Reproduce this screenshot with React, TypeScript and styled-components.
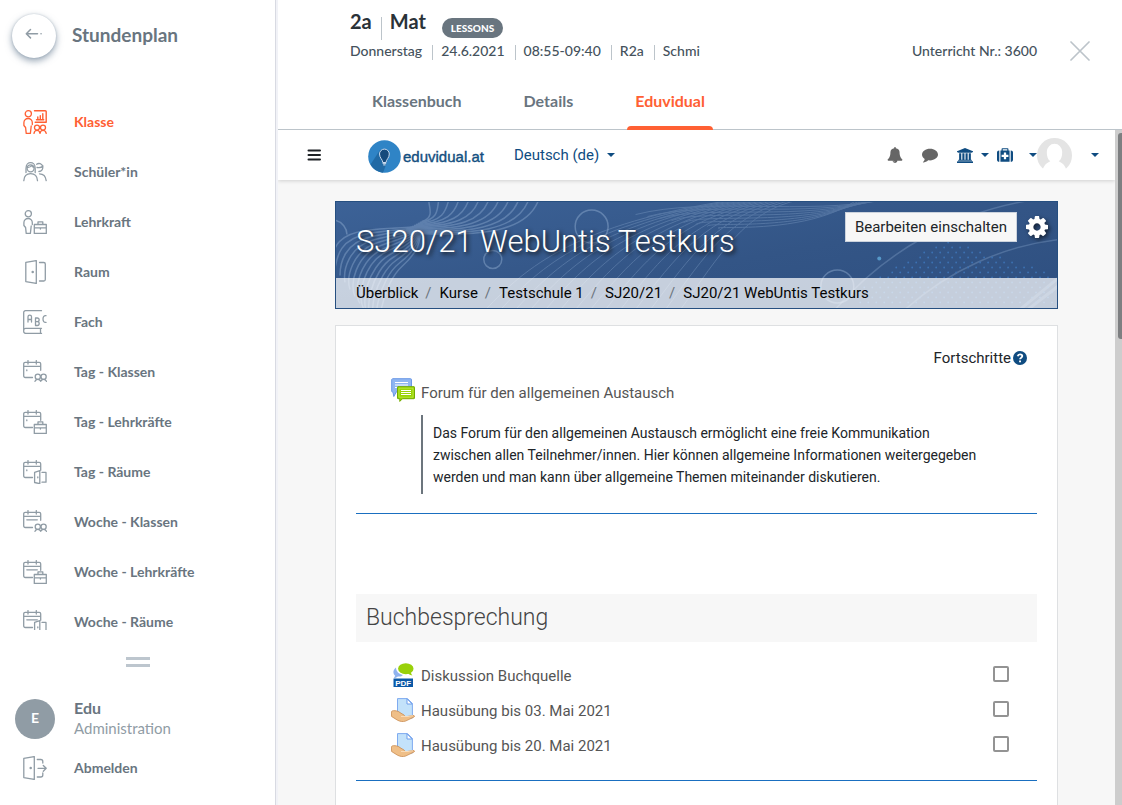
import React from "react";
import styled, { createGlobalStyle } from "styled-components";

const brand = {
  orange: "#ff6033",
  slate: "#69757f",
  slateDark: "#45525c",
  slateLight: "#909ca5",
  rule: "#bcc4ca",
  navy: "#0f4c81",
};

const GlobalStyle = createGlobalStyle`
  *, *::before, *::after { box-sizing: border-box; }
  html, body { margin: 0; padding: 0; background: #fff; }
  body { font-family: Lato, "Liberation Sans", sans-serif; }
  button { font: inherit; color: inherit; background: none; border: 0; padding: 0; cursor: pointer; }
  a { color: inherit; text-decoration: none; }
  ul, ol, h1, h2, p { margin: 0; padding: 0; list-style: none; }
  svg { display: block; flex: none; }
`;

/* ---------- shell ---------- */

const Shell = styled.div`
  display: flex;
  height: 100vh;
  overflow: hidden;
`;

const Sidebar = styled.aside`
  flex: none;
  width: 278px;
  display: flex;
  flex-direction: column;
  border-right: 2px solid #f1f2f7;
  box-shadow: inset -1px 0 0 #d8dae2;
`;

const SidebarHead = styled.div`
  display: flex;
  align-items: flex-start;
  gap: 16px;
  height: 97px;
  padding: 14px 12px 0;
`;

const BackButton = styled.button`
  width: 44px;
  height: 44px;
  border-radius: 50%;
  background: #fff;
  box-shadow: 0 3px 7px rgba(80, 105, 130, 0.6), 0 0 2px rgba(80, 105, 130, 0.3);
  display: flex;
  justify-content: center;
  padding-top: 12px;
`;

const SidebarTitle = styled.h1`
  font-size: 19px;
  line-height: 42px;
  font-weight: 700;
  color: ${brand.slate};
`;

const NavList = styled.ul`
  flex: 1;
  min-height: 0;
  overflow: hidden;
`;

const NavLink = styled.a<{ $active?: boolean }>`
  display: flex;
  align-items: center;
  gap: 27px;
  height: 50px;
  padding-left: 23px;
  font-size: 14px;
  font-weight: 700;
  color: ${(p) => (p.$active ? brand.orange : brand.slate)};
  svg { color: ${(p) => (p.$active ? brand.orange : brand.slateLight)}; }
  span { padding-bottom: 2px; }
`;

const SidebarFoot = styled.div`
  flex: none;
  padding: 27px 0 12px;
`;

const Handle = styled.div`
  width: 24px;
  height: 10px;
  margin: 0 auto 27px;
  border: solid #bdc6ce;
  border-width: 3px 0;
`;

const User = styled.div`
  display: flex;
  align-items: center;
  gap: 19px;
  padding: 4px 15px 3px;
`;

const Avatar = styled.div`
  width: 40px;
  height: 40px;
  border-radius: 50%;
  background: ${brand.slateLight};
  color: #fff;
  font-size: 14px;
  font-weight: 700;
  line-height: 38px;
  text-align: center;
`;

const UserText = styled.div`
  padding-bottom: 2px;
  line-height: 20px;
`;

const UserName = styled.div`
  font-size: 16px;
  font-weight: 700;
  color: ${brand.slate};
`;

const UserRole = styled.div`
  font-size: 15px;
  color: ${brand.slateLight};
`;

/* ---------- lesson header ---------- */

const Main = styled.main`
  flex: 1;
  min-width: 0;
  display: flex;
  flex-direction: column;
`;

const LessonHead = styled.header`
  display: flex;
  justify-content: space-between;
  padding: 9px 32px 0 72px;
`;

const TitleRow = styled.div`
  display: flex;
  align-items: flex-start;
  height: 32px;
  font-size: 20px;
  line-height: 25px;
  font-weight: 700;
  color: #2a3238;
`;

const TitlePart = styled.span`
  & + & {
    margin-left: 9px;
    padding-left: 9px;
    position: relative;
  }
  & + &::before {
    content: "";
    position: absolute;
    left: 0;
    top: 8px;
    width: 1px;
    height: 23px;
    background: ${brand.rule};
  }
`;

const Badge = styled.span`
  margin: 9px 0 0 16px;
  padding: 0 9px;
  border-radius: 10px;
  background: ${brand.slate};
  color: #fff;
  font-size: 10px;
  font-weight: 900;
  line-height: 20px;
`;

const Meta = styled.ul`
  display: flex;
  font-size: 14px;
  line-height: 19px;
  font-weight: 500;
  color: ${brand.slateDark};
`;

const MetaItem = styled.li`
  & + & {
    margin-left: 10px;
    padding-left: 9px;
    background: linear-gradient(${brand.rule}, ${brand.rule}) 0 4px / 1px 16px no-repeat;
  }
`;

const HeadRight = styled.div`
  display: flex;
  gap: 33px;
  padding-top: 32px;
  font-size: 14px;
  line-height: 19px;
  font-weight: 500;
  color: ${brand.slateDark};
`;

const CloseButton = styled.button`
  height: 20px;
  color: ${brand.rule};
`;

const Tabs = styled.nav`
  display: flex;
  gap: 46px;
  padding: 16px 86px 0;
  border-bottom: 1px solid ${brand.rule};
`;

const Tab = styled.a<{ $active?: boolean }>`
  padding: 0 8px;
  height: 53px;
  margin-bottom: -1px;
  font-size: 16px;
  line-height: 48px;
  font-weight: 700;
  color: ${(p) => (p.$active ? brand.orange : brand.slate)};
  position: relative;
  &::after {
    content: "";
    display: ${(p) => (p.$active ? "block" : "none")};
    position: absolute;
    inset: auto 0 0;
    height: 4px;
    border-radius: 4px 4px 0 0;
    background: ${brand.orange};
  }
`;

/* ---------- embedded course page ---------- */

const Frame = styled.div`
  flex: 1;
  min-height: 0;
  display: flex;
  font-family: Roboto, "Liberation Sans", sans-serif;
  font-size: 15px;
`;

const Page = styled.div`
  flex: 1;
  min-width: 0;
  display: flex;
  flex-direction: column;
  overflow: hidden;
  background: #f7f7f7;
`;

const ScrollTrack = styled.div`
  flex: none;
  width: 7px;
  padding: 3px 0 0 3px;
  background: #cdcdcd;
`;

const ScrollThumb = styled.div`
  height: 206px;
  border-radius: 3px 0 0 3px;
  background: #7d7f81;
`;

const TopBar = styled.div`
  flex: none;
  display: flex;
  align-items: center;
  height: 50px;
  padding: 0 16px 0 29px;
  background: #fff;
  box-shadow: 0 1px 4px rgba(0, 0, 0, 0.16);
  color: ${brand.navy};
`;

const Logo = styled.a`
  display: flex;
  align-items: center;
  gap: 2px;
  margin: 2px 30px 0 46px;
  font-family: "Liberation Sans", sans-serif;
  font-size: 15px;
  color: #134f80;
  -webkit-text-stroke: 0.4px #134f80;
`;

const MenuButton = styled.button`
  display: flex;
  align-items: center;
  gap: 8px;
`;

const Tools = styled.div`
  flex: 1;
  display: flex;
  align-items: center;
  justify-content: flex-end;
`;

const ToolButton = styled.button<{ $muted?: boolean; $space: number }>`
  display: flex;
  align-items: center;
  gap: 8px;
  margin-left: ${(p) => p.$space}px;
  color: ${(p) => (p.$muted ? "#666" : brand.navy)};
`;

const WideToolButton = styled(ToolButton)`
  gap: 16px;
`;

const Caret = styled.span`
  border: 4px solid transparent;
  border-top-color: currentColor;
  border-bottom: 0;
`;

const UserMenu = styled.button`
  display: flex;
  align-items: center;
  gap: 19px;
  color: ${brand.navy};
`;

const Content = styled.div`
  flex: 1;
  display: flex;
  flex-direction: column;
  padding: 21px 57px 0;
`;

const Banner = styled.header`
  position: relative;
  border: 1px solid #264f80;
  background: linear-gradient(170deg, #3c6297 0%, #335586 55%, #2e4f80 100%);
`;

const BannerArt = styled.svg`
  position: absolute;
  inset: 0;
  width: 100%;
  height: 100%;
`;

const BannerTop = styled.div`
  position: relative;
  display: flex;
  justify-content: space-between;
  align-items: flex-start;
  height: 76px;
  padding: 10px 9px 0 20px;
`;

const CourseTitle = styled.h1`
  font-size: 31px;
  line-height: 38px;
  padding-top: 11px;
  font-weight: 300;
  color: #fff;
  text-shadow: 2px 2px 4px #111;
`;

const BannerActions = styled.div`
  display: flex;
  align-items: center;
  gap: 9px;
`;

const EditButton = styled.button`
  height: 30px;
  padding: 0 9px;
  border: 1px solid #ccd3dd;
  background: #f7f7f7;
  color: #212529;
`;

const GearButton = styled.button`
  color: #fff;
  filter: drop-shadow(2px 2px 2px rgba(0, 0, 0, 0.6));
`;

const Crumbs = styled.ol`
  position: relative;
  display: flex;
  height: 30px;
  padding-left: 20px;
  line-height: 30px;
  background: rgba(255, 255, 255, 0.72);
  color: #050505;
`;

const Crumb = styled.li`
  & + &::before {
    content: "/";
    padding: 0 8px 0 7px;
    color: #6c757d;
  }
`;

const Card = styled.section`
  flex: 1;
  margin-top: 16px;
  padding: 21px 20px;
  border: 1px solid #dee0e2;
  border-bottom: 0;
  background: #fff;
`;

const Progress = styled.div`
  display: flex;
  align-items: center;
  justify-content: flex-end;
  gap: 2px;
  height: 22px;
  padding-right: 10px;
  color: #212529;
  svg { color: ${brand.navy}; }
`;

const ForumRow = styled.div`
  display: flex;
  align-items: flex-start;
  gap: 6px;
  height: 37px;
  margin-top: 9px;
  padding-left: 35px;
  color: #555;
  line-height: 31px;
`;

const Quote = styled.div`
  margin: 0 50px 19px 65px;
  padding: 7px 6px 6px 10px;
  border-left: 2px solid #6c757d;
  font-size: 14px;
  line-height: 22px;
  color: #212529;
`;

const Section = styled.section<{ $intro?: boolean }>`
  padding-bottom: ${(p) => (p.$intro ? "0" : "18px")};
  margin-bottom: ${(p) => (p.$intro ? "80px" : "0")};
  border-bottom: 1px solid #1a6fc0;
`;

const SectionTitle = styled.h2`
  padding-left: 10px;
  margin-bottom: 15px;
  background: #f7f7f7;
  font-size: 23px;
  line-height: 48px;
  font-weight: 300;
  color: #444;
`;

const ActivityRow = styled.li`
  display: flex;
  align-items: center;
  gap: 6px;
  height: 35px;
  padding: 0 28px 0 35px;
  color: #555;
  a { padding-top: 2px; }
`;

const Tick = styled.input`
  appearance: none;
  width: 16px;
  height: 16px;
  margin: 0 0 2px auto;
  border: 2px solid #939393;
  border-radius: 2px;
  background: #fff;
`;

/* ---------- sidebar icons ---------- */

const Line = ({ children }: { children: React.ReactNode }) => (
  <svg width="24" height="24" viewBox="0 0 24 24" fill="none" stroke="currentColor" strokeWidth="1.3" strokeLinecap="round" strokeLinejoin="round" aria-hidden="true">
    {children}
  </svg>
);

const Teacher = () => (
  <>
    <circle cx="5.300" cy="3.800" r="3.100" />
    <path d="M9.300 14.500v-1.800a4.200 4.200 0 0 0-8.400 0v2.800l1.700 2 .6 5.900h4.200l.8-7.400" />
  </>
);

const Pair = () => (
  <>
    <circle cx="14.800" cy="16.800" r="2.600" />
    <circle cx="20.600" cy="16.800" r="2.600" />
    <path d="M12 21.300c.5-1.500 1.500-2 2.800-2s2.400.7 2.900 2c.5-1.300 1.500-2 2.900-2 1.300 0 2.300.7 2.800 2" />
  </>
);

const Bag = () => (
  <path d="M11.300 14.500h12v9h-12zM11.300 17.800h12M15 14.500v-2.700h4.800v2.700M17.400 17.800v1.200" />
);

const MiniDoor = () => (
  <path d="M11.600 12.300l5.200-1.600v13l-5.200-1.200zM19 12.400h4v9.800h-4M14.800 17v.8" />
);

const Calendar = ({ week }: { week?: boolean }) => (
  <>
    <path d="M9.500 17.500H2.200a1.500 1.500 0 0 1-1.500-1.500V3.800a1.500 1.500 0 0 1 1.500-1.500h14a1.500 1.500 0 0 1 1.500 1.500v6.500M.7 6.400h17M5 .6v3.400M13.300 .6v3.400" />
    {week ? <path d="M3.800 9.800h10.500" /> : <path d="M3.800 10v.7" />}
  </>
);

const KlasseIcon = () => (
  <Line>
    <Teacher />
    <path d="M11.500.8h10.700a1 1 0 0 1 1 1v10.500h-11M13.500 9.800h7.200M14.800 9.500V7M17.300 9.500V5.800M19.800 9.500V3.800" strokeWidth="1.400" />
    <circle cx="14" cy="17.600" r="2.500" />
    <circle cx="20" cy="17.600" r="2.500" />
    <path d="M11 23.400c.3-2 1.300-3 3-3s2.700 1 3 3c.3-2 1.300-3 3-3s2.800 1 3.200 3" />
  </Line>
);

const StudentsIcon = () => (
  <Line>
    <path d="M3 12.500c.2-2-.3-2.500.2-5.500A4.400 4.400 0 0 1 12 7c.5 3 0 3.500.2 5.500" />
    <circle cx="7.600" cy="8.300" r="3.500" />
    <path d="M4.500 7.300c2 .2 3.300-.6 4-1.800.5 1 1.300 1.600 2.200 1.700M13.600 4.200a4 4 0 1 1 2.300 7.300M14 7.500c3 .6 5-.3 6-1.500M.8 20.700c.3-4.500 2.500-7 6.800-7s6.600 2.500 6.900 7M16.500 13.800c4.200 0 6.200 2.600 6.700 6.900" />
  </Line>
);

const LehrkraftIcon = () => <Line><Teacher /><Bag /></Line>;

const DoorIcon = () => (
  <Line>
    <path d="M2.800 2.300L13.300.6v22.800L2.800 21.600zM16.500 2.500h4.300a1.500 1.500 0 0 1 1.500 1.500v15.500a1.500 1.500 0 0 1-1.500 1.500h-4.300" />
    <circle cx="9.700" cy="12" r=".6" fill="currentColor" />
  </Line>
);

const BookIcon = () => (
  <Line>
    <path d="M18.500.7h-16A1.800 1.800 0 0 0 .7 2.500v18.800a2 2 0 0 0 2 2.100h15.800M18.500 18.300H2.700a2 2 0 0 0-2 2M17.500 18.300v5M5 12V6.800a1.700 1.700 0 0 1 3.500 0V12M5 9.500h3.500M12.500 8v7.500h1.800a1.700 1.700 0 0 0 0-3.800 1.800 1.800 0 0 0 0-3.700zM12.500 11.700h1.800M23 5.700c-2-.3-3 1-3 3.300s1 3.700 3 3.400" />
  </Line>
);

const LogoutIcon = () => (
  <Line>
    <path d="M.8 2.300L11.300.6v22.800L.8 21.600zM14.300 3.500h3.500a2 2 0 0 1 2 2v1.500M14.300 21h3.500a2 2 0 0 0 2-2v-2M15 12.300h8M20.300 9.500l2.900 2.800-2.900 2.900" />
    <circle cx="7.700" cy="12" r=".6" fill="currentColor" />
  </Line>
);

const TagKlassen = () => <Line><Calendar /><Pair /></Line>;
const TagLehrer = () => <Line><Calendar /><Bag /></Line>;
const TagRaum = () => <Line><Calendar /><MiniDoor /></Line>;
const WocheKlassen = () => <Line><Calendar week /><Pair /></Line>;
const WocheLehrer = () => <Line><Calendar week /><Bag /></Line>;
const WocheRaum = () => <Line><Calendar week /><MiniDoor /></Line>;

/* ---------- course icons ---------- */

const Solid = ({ w, h, box, d }: { w: number; h: number; box: string; d: string }) => (
  <svg width={w} height={h} viewBox={box} fill="currentColor" aria-hidden="true">
    <path d={d} />
  </svg>
);

const BellIcon = () => (
  <Solid w={16} h={16} box="0 0 1792 1792" d="M912 1696q0-16-16-16-59 0-101.500-42.500t-42.500-101.500q0-16-16-16t-16 16q0 73 51.500 124.500t124.500 51.500q16 0 16-16zm816-288q0 52-38 90t-90 38h-448q0 106-75 181t-181 75-181-75-75-181h-448q-52 0-90-38t-38-90q50-42 91-88t85-119.500 74.500-158.500 50-206 19.500-260q0-152 117-282.500t307-158.500q-8-19-8-39 0-40 28-68t68-28 68 28 28 68q0 20-8 39 190 28 307 158.500t117 282.500q0 139 19.500 260t50 206 74.500 158.500 85 119.500 91 88z" />
);

const CommentIcon = () => (
  <Solid w={16} h={15} box="0 0 16 15" d="M8 .8c4.400 0 8 2.600 8 5.800s-3.600 5.800-8 5.800c-.6 0-1.200 0-1.800-.1C4.700 13.700 3 14.400 1.200 14.600c-.3 0-.4-.3-.2-.5.8-.8 1.500-1.500 1.700-3C1 10 0 8.400 0 6.600 0 3.400 3.600.8 8 .8z" />
);

const BankIcon = () => (
  <Solid w={16} h={15} box="0 0 1920 1792" d="M960 0l960 384v128h-128q0 26-20.500 45t-48.500 19h-1526q-28 0-48.500-19t-20.500-45h-128v-128zm-704 640h256v768h128v-768h256v768h128v-768h256v768h128v-768h256v768h59q28 0 48.500 19t20.500 45v64h-1664v-64q0-26 20.500-45t48.500-19h59v-768zm1595 960q28 0 48.500 19t20.500 45v128h-1920v-128q0-26 20.500-45t48.500-19h1782z" />
);

const MedkitIcon = () => (
  <Solid w={16} h={16} box="0 0 1792 1792" d="M1280 1088v-192q0-14-9-23t-23-9h-224v-224q0-14-9-23t-23-9h-192q-14 0-23 9t-9 23v224h-224q-14 0-23 9t-9 23v192q0 14 9 23t23 9h224v224q0 14 9 23t23 9h192q14 0 23-9t9-23v-224h224q14 0 23-9t9-23zm-640-704h512v-128h-512v128zm-384 0v1280h-32q-92 0-158-66t-66-158v-832q0-92 66-158t158-66h32zm1152 0v1280h-1024v-1280h128v-160q0-40 28-68t68-28h576q40 0 68 28t28 68v160h128zm384 224v832q0 92-66 158t-158 66h-32v-1280h32q92 0 158 66t66 158z" />
);

const GearIcon = () => (
  <Solid w={22} h={22} box="0 128 1536 1536" d="M1024 896q0-106-75-181t-181-75-181 75-75 181 75 181 181 75 181-75 75-181zm512-109v222q0 12-8 23t-20 13l-185 28q-19 54-39 91 35 50 107 138 10 12 10 25t-9 23q-27 37-99 108t-94 71q-12 0-26-9l-138-108q-44 23-91 38-16 136-29 186-7 28-36 28h-222q-14 0-24.500-8.500t-11.500-21.500l-28-184q-49-16-90-37l-141 107q-10 9-25 9-14 0-25-11-126-114-165-168-7-10-7-23 0-12 8-23 15-21 51-66.500t54-70.500q-27-50-41-99l-183-27q-13-2-21-12.500t-8-23.500v-222q0-12 8-23t19-13l186-28q14-46 39-92-40-57-107-138-10-12-10-24 0-10 9-23 26-36 98.500-107.500t94.500-71.500q13 0 26 10l138 107q44-23 91-38 16-136 29-186 7-28 36-28h222q14 0 24.500 8.500t11.500 21.500l28 184q49 16 90 37l142-107q9-9 24-9 13 0 25 10 129 119 165 170 7 8 7 22 0 12-8 23-15 21-51 66.500t-54 70.500q26 50 41 98l183 28q13 2 21 12.500t8 23.500z" />
);

const HelpIcon = () => (
  <svg width="14" height="14" viewBox="0 0 14 14" aria-hidden="true">
    <circle cx="7" cy="7" r="7" fill="currentColor" />
    <path d="M4.700 5.200C5 3.900 5.800 3.300 7 3.300c1.400 0 2.300.7 2.300 1.800C9.300 6.700 7 6.600 7 8.300" fill="none" stroke="#fff" strokeWidth="1.800" />
    <path d="M6.100 9.400h1.900v1.800H6.100z" fill="#fff" />
  </svg>
);

const BulbLogo = () => (
  <svg width="33" height="33" viewBox="0 0 33 33" aria-hidden="true">
    <circle cx="16.500" cy="16.500" r="16.300" fill="#2f84c6" />
    <path d="M12 10L2.500 24.500A16.300 16.300 0 0 0 15 32.700l3-8L20.500 15z" fill="#216aa5" />
    <path d="M14.800 22.500c-.1-3-3.300-4.500-3.300-8.500a4.900 4.900 0 0 1 9.800 0c0 4-3.200 5.500-3.300 8.500z" fill="#154a7c" stroke="#c9d9ee" strokeWidth="1" />
    <path d="M14.600 23.300h3.600M15.200 24.900h2.400" stroke="#dbe6f3" strokeWidth="1" />
  </svg>
);

const PersonAvatar = () => (
  <svg width="35" height="35" viewBox="0 0 35 35" aria-hidden="true">
    <circle cx="17.500" cy="17.500" r="17.500" fill="#e4e4e4" />
    <path d="M5 35c.8-6 3.300-9.500 8.300-11.700C10.700 21.500 9.800 18 9.800 14a7.700 8.200 0 0 1 15.400 0c0 4-.9 7.500-3.500 9.300C26.700 25.500 29.200 29 30 35z" fill="#fff" />
  </svg>
);

const ForumIcon = () => (
  <svg width="24" height="24" viewBox="0 0 24 24" aria-hidden="true">
    <path d="M1.500.7h18a1 1 0 0 1 1 1v12H5.500L2.800 18.500 2 14.300.7 13.500v-12z" fill="#8fb6f2" stroke="#6b98e6" />
    <path d="M4 4.500h13M4 7h13M4 9.500h5" stroke="#fff" />
    <path d="M7 8.700h16a.5.500 0 0 1 .5.500v11a.5.500 0 0 1-.5.500H11.500L8.800 23.400v-2.700H7a.5.500 0 0 1-.5-.5v-11A.5.500 0 0 1 7 8.700z" fill="#98d404" stroke="#72ab00" />
    <path d="M8 10.200h14v9H8z" fill="none" stroke="#c4ec52" strokeWidth=".7" />
    <path d="M10 12.500h10M10 14.500h10M10 16.500h10" stroke="#fff" />
  </svg>
);

const PdfText = styled.text`
  font: 700 8px "Liberation Sans", sans-serif;
  fill: #fff;
`;

const PdfIcon = () => (
  <svg width="24" height="24" viewBox="0 0 24 24" aria-hidden="true">
    <path d="M5 4.500c-4 3-2.500 7-1 8 0 1.300-.7 2-1.200 2.500 2 0 3.200-.7 4-1.500 2.200.3 4.200-.3 5-1.500C8 11 5 8.500 5 4.500z" fill="#8fb3ee" />
    <ellipse cx="14.800" cy="5.700" rx="7.700" ry="5.500" fill="#99d10a" />
    <path d="M15 10.500l5-1c0 1.200.5 2 1.500 2.800-2 0-3.500-.7-4-1.500z" fill="#99d10a" />
    <rect x="2.500" y="15.500" width="19.500" height="8.500" fill="#0b58a6" />
    <PdfText x="4.200" y="22.600">PDF</PdfText>
  </svg>
);

const HandIcon = () => (
  <svg width="24" height="24" viewBox="0 0 24 24" aria-hidden="true">
    <path d="M6.500.6h10L21.400 5.500V20H6.500z" fill="#c3e2fa" stroke="#7fabf0" />
    <path d="M16 .8v5.200h5.200z" fill="#fff" stroke="#6f9fec" />
    <path d="M.4 13.800c.4-1 1.600-1.300 3.600-1.100 2.500.2 3.500.7 5 1.900l4 2.400c1 .6.800 1.500 0 1.500h-3 6l6-1c1.600-.2 2 .9.900 1.600l-8.400 4c-2.500.9-5.500.4-8-.9L.6 18.500z" fill="#efbf88" stroke="#c98b50" strokeWidth=".8" />
    <path d="M10 18.500h7l5-.8" fill="none" stroke="#f9dcb9" />
  </svg>
);

/* ---------- banner artwork ---------- */

const range = (n: number) => Array.from({ length: n }, (_, i) => i);

const BannerPattern = () => (
  <BannerArt viewBox="0 0 722 107" preserveAspectRatio="xMidYMid slice" fill="none" stroke="#9fbbdd" aria-hidden="true">
    <g strokeWidth="1.500" opacity=".36">
      {range(12).map((i) => (
        <path key={i} d={`M${93 + i * 10} -2C${92 + i * 9} ${4 + i * 2.500} ${100 + i * 4} ${16 + i * 1.800} ${86 - i * 2} ${20 + i}`} />
      ))}
      {range(13).map((i) => (
        <path key={i} d={`M86 22C${78 + i * 0.500} ${28 + i} ${60 + i * 2} ${25 + i * 2} ${30 + i * 3} ${29 + i * 3}S${-2 + i * 3} ${48 + i * 7} ${-6 + i * 5} ${60 + i * 7}`} />
      ))}
    </g>
    <g strokeWidth="1" opacity=".28">
      {range(14).map((i) => (
        <path key={i} d={`M${150 + i * 15} 108C${190 + i * 15} ${66 - i} ${240 + i * 13} ${22 - i} ${400 + i * 5} -2`} />
      ))}
      {range(8).map((i) => (
        <path key={i} d={`M${300 + i * 12} ${13 + i * 2}C370 ${-5 + i * 4} 470 ${14 + i * 3} ${550 - i * 4} -2`} />
      ))}
      <path d="M500 108C550 50 620 10 700 -2M570 108C615 68 670 44 724 38" strokeWidth="1.500" />
      <path d="M685 108L724 76M693 108L724 84" strokeWidth="3" />
    </g>
    <g opacity=".4" strokeWidth="1.500">
      <circle cx="256" cy="25" r="16.500" />
      <circle cx="157" cy="58" r="9" />
      <circle cx="502" cy="85" r="16.500" />
      <path d="M0 19a15 15 0 0 1 11 14" />
    </g>
    <g stroke="none" fill="#3d72b3">
      {range(13).map((r) =>
        range(28).map((c) => {
          const x = 525 + c * 8 + (r % 2) * 4;
          const y = 41 + r * 5;
          return x > 605 - r * 9 && x < 620 + r * 16 && x < 720 ? <circle key={`${r}-${c}`} cx={x} cy={y} r=".9" /> : null;
        })
      )}
      <circle cx="544" cy="57" r="2" fill="#5698c8" />
    </g>
  </BannerArt>
);

/* ---------- data ---------- */

const nav = [
  { label: "Klasse", Icon: KlasseIcon, active: true },
  { label: "Schüler*in", Icon: StudentsIcon },
  { label: "Lehrkraft", Icon: LehrkraftIcon },
  { label: "Raum", Icon: DoorIcon },
  { label: "Fach", Icon: BookIcon },
  { label: "Tag - Klassen", Icon: TagKlassen },
  { label: "Tag - Lehrkräfte", Icon: TagLehrer },
  { label: "Tag - Räume", Icon: TagRaum },
  { label: "Woche - Klassen", Icon: WocheKlassen },
  { label: "Woche - Lehrkräfte", Icon: WocheLehrer },
  { label: "Woche - Räume", Icon: WocheRaum },
];

const meta = ["Donnerstag", "24.6.2021", "08:55-09:40", "R2a", "Schmi"];
const crumbs = ["Überblick", "Kurse", "Testschule 1", "SJ20/21", "SJ20/21 WebUntis Testkurs"];
const activities = [
  { label: "Diskussion Buchquelle", Icon: PdfIcon },
  { label: "Hausübung bis 03. Mai 2021", Icon: HandIcon },
  { label: "Hausübung bis 20. Mai 2021", Icon: HandIcon },
];

export default function App() {
  return (
    <>
      <GlobalStyle />
      <Shell>
        <Sidebar>
          <SidebarHead>
            <BackButton aria-label="Zurück">
              <svg width="18" height="16" viewBox="0 0 18 16" fill="none" stroke={brand.slateLight} strokeWidth="1.500" strokeLinecap="round" strokeLinejoin="round" aria-hidden="true">
                <path d="M5.500 3.500L1.300 7.700l4.200 4.200M1.500 7.700h11M16 7.700h.1" />
              </svg>
            </BackButton>
            <SidebarTitle>Stundenplan</SidebarTitle>
          </SidebarHead>
          <NavList>
            {nav.map(({ label, Icon, active }) => (
              <li key={label}>
                <NavLink href="#" $active={active}>
                  <Icon />
                  <span>{label}</span>
                </NavLink>
              </li>
            ))}
          </NavList>
          <SidebarFoot>
            <Handle />
            <User>
              <Avatar>E</Avatar>
              <UserText>
                <UserName>Edu</UserName>
                <UserRole>Administration</UserRole>
              </UserText>
            </User>
            <NavLink href="#">
              <LogoutIcon />
              <span>Abmelden</span>
            </NavLink>
          </SidebarFoot>
        </Sidebar>

        <Main>
          <LessonHead>
            <div>
              <TitleRow>
                <TitlePart>2a</TitlePart>
                <TitlePart>Mat</TitlePart>
                <Badge>LESSONS</Badge>
              </TitleRow>
              <Meta>
                {meta.map((m) => (
                  <MetaItem key={m}>{m}</MetaItem>
                ))}
              </Meta>
            </div>
            <HeadRight>
              <span>Unterricht Nr.: 3600</span>
              <CloseButton aria-label="Schließen">
                <svg width="20" height="20" viewBox="0 0 20 20" fill="none" stroke="currentColor" strokeWidth="1.700" strokeLinecap="round" aria-hidden="true">
                  <path d="M1 1l18 18M19 1L1 19" />
                </svg>
              </CloseButton>
            </HeadRight>
          </LessonHead>
          <Tabs>
            <Tab href="#">Klassenbuch</Tab>
            <Tab href="#">Details</Tab>
            <Tab href="#" $active>Eduvidual</Tab>
          </Tabs>

          <Frame>
            <Page>
              <TopBar>
                <button aria-label="Menü">
                  <svg width="15" height="12" viewBox="0 0 15 12" stroke="#1d2125" strokeWidth="2" strokeLinecap="round" aria-hidden="true">
                    <path d="M1.500 1.500h11.500M1.500 6h11.500M1.500 10.500h11.500" />
                  </svg>
                </button>
                <Logo href="#">
                  <BulbLogo />
                  eduvidual.at
                </Logo>
                <MenuButton>
                  Deutsch (de)
                  <Caret />
                </MenuButton>
                <Tools>
                  <ToolButton $muted $space={0} aria-label="Mitteilungen"><BellIcon /></ToolButton>
                  <ToolButton $muted $space={19} aria-label="Nachrichten"><CommentIcon /></ToolButton>
                  <ToolButton $space={19} aria-label="Schule"><BankIcon /><Caret /></ToolButton>
                  <WideToolButton $space={8} aria-label="Hilfe"><MedkitIcon /><Caret /></WideToolButton>
                  <UserMenu aria-label="Nutzermenü"><PersonAvatar /><Caret /></UserMenu>
                </Tools>
              </TopBar>
              <Content>
                <Banner>
                  <BannerPattern />
                  <BannerTop>
                    <CourseTitle>SJ20/21 WebUntis Testkurs</CourseTitle>
                    <BannerActions>
                      <EditButton>Bearbeiten einschalten</EditButton>
                      <GearButton aria-label="Einstellungen"><GearIcon /></GearButton>
                    </BannerActions>
                  </BannerTop>
                  <Crumbs>
                    {crumbs.map((c) => (
                      <Crumb key={c}><a href="#">{c}</a></Crumb>
                    ))}
                  </Crumbs>
                </Banner>

                <Card>
                  <Progress>
                    Fortschritte
                    <HelpIcon />
                  </Progress>
                  <Section $intro>
                    <ForumRow>
                      <ForumIcon />
                      <a href="#">Forum für den allgemeinen Austausch</a>
                    </ForumRow>
                    <Quote>
                      Das Forum für den allgemeinen Austausch ermöglicht eine freie Kommunikation zwischen allen Teilnehmer/innen. Hier können allgemeine Informationen weitergegeben werden und man kann über allgemeine Themen miteinander diskutieren.
                    </Quote>
                  </Section>
                  <Section>
                    <SectionTitle>Buchbesprechung</SectionTitle>
                    <ul>
                      {activities.map(({ label, Icon }) => (
                        <ActivityRow key={label}>
                          <Icon />
                          <a href="#">{label}</a>
                          <Tick type="checkbox" aria-label={`${label} abgeschlossen`} />
                        </ActivityRow>
                      ))}
                    </ul>
                  </Section>
                </Card>
              </Content>
            </Page>
            <ScrollTrack>
              <ScrollThumb />
            </ScrollTrack>
          </Frame>
        </Main>
      </Shell>
    </>
  );
}
